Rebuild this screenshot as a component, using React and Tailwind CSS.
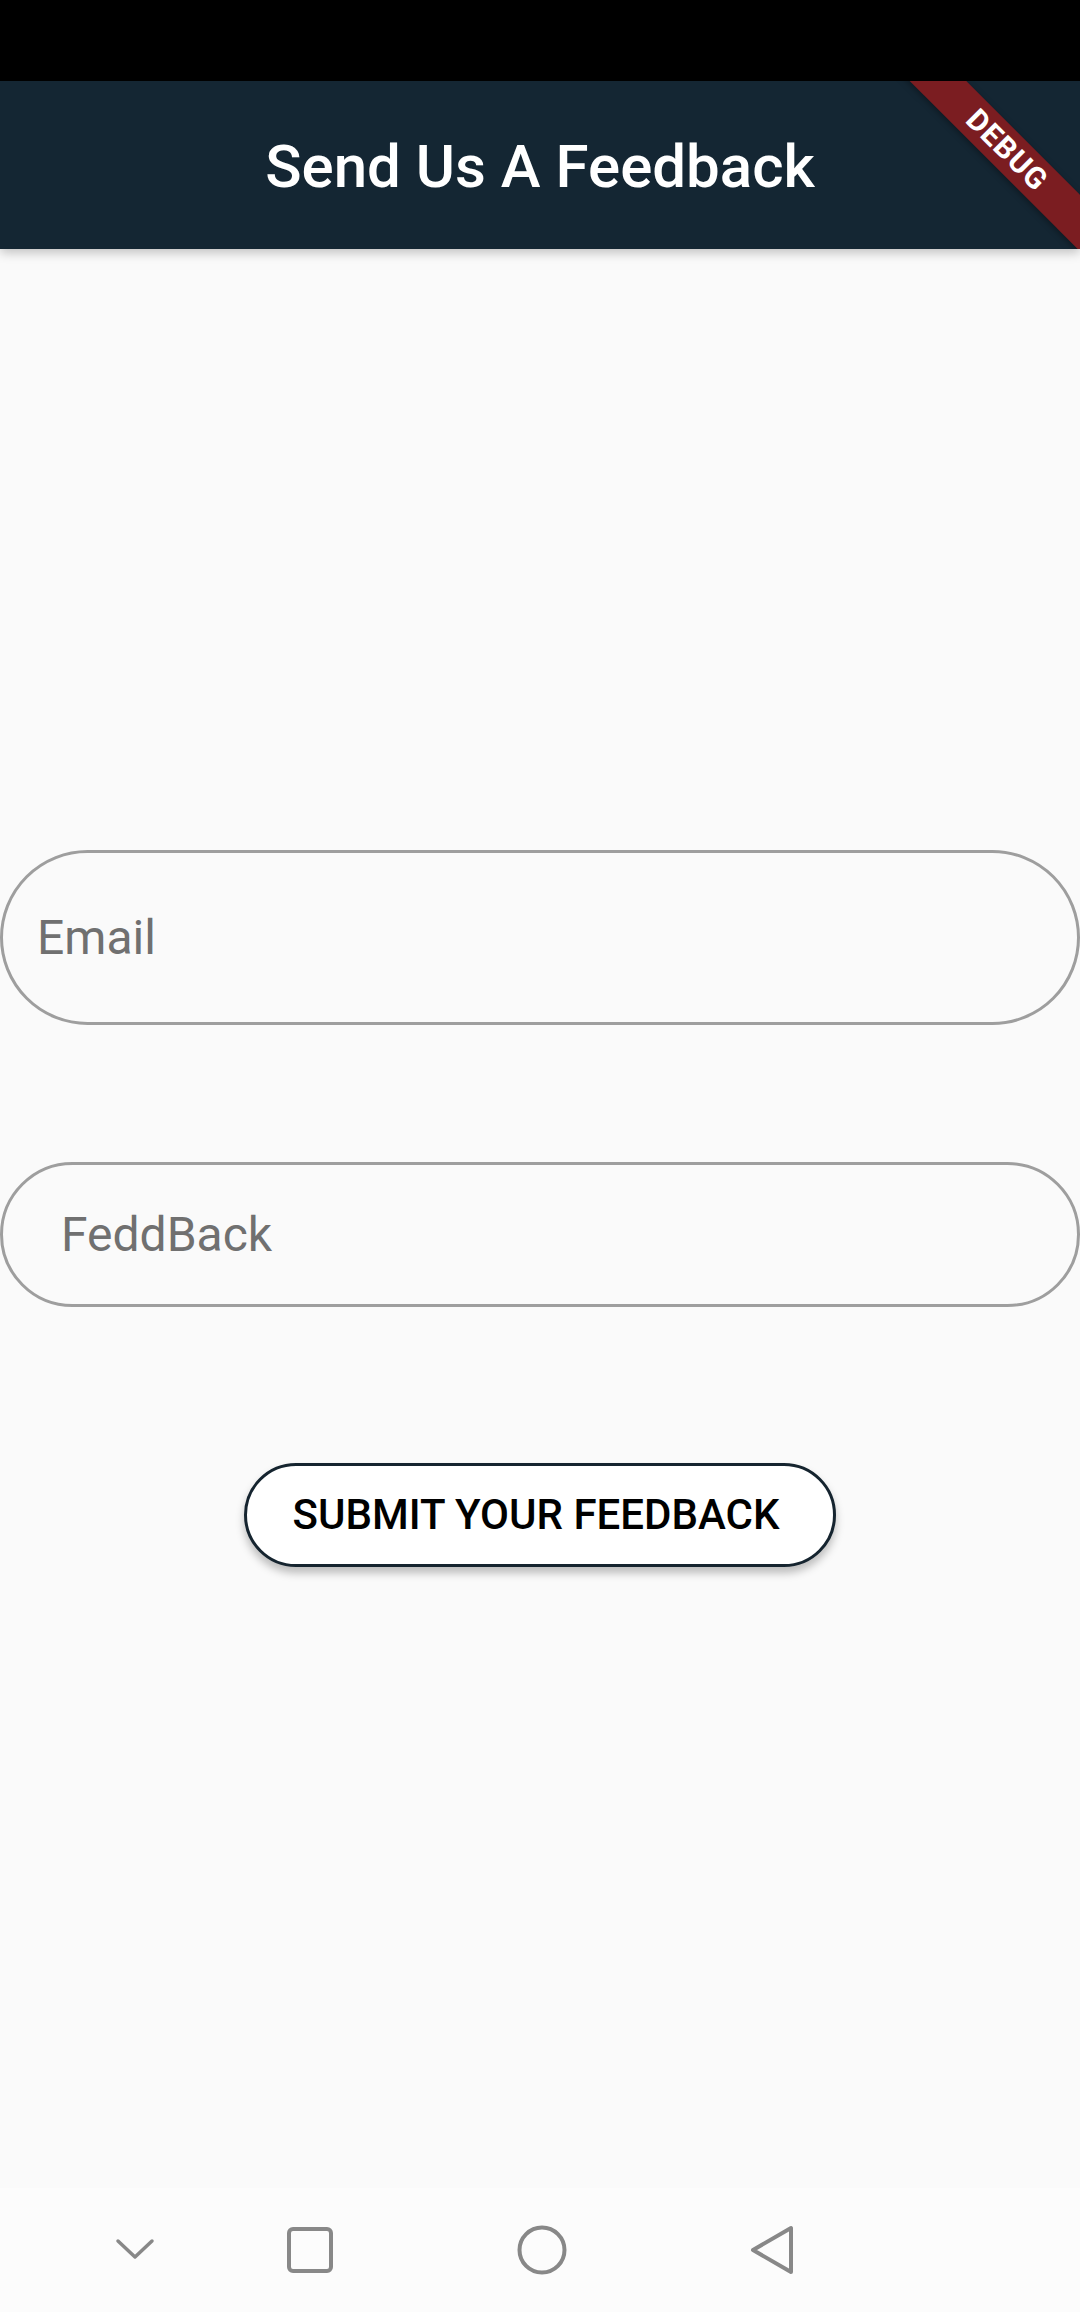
import React from "react";

const DebugBanner = () => (
  <div className="pointer-events-none absolute left-[857px] top-[49px] flex h-[40px] w-[300px] rotate-45 items-center justify-center bg-[#7b1d21] shadow-[0_2px_6px_rgba(0,0,0,0.35)]">
    <span className="text-[30px] font-bold leading-none tracking-[1px] text-white">DEBUG</span>
  </div>
);

const NavBar = () => (
  <div className="flex h-[124px] items-center bg-[#fcfcfc]">
    {/* back-ish chevron */}
    <svg className="ml-[115px]" width="40" height="24" viewBox="0 0 40 24" fill="none">
      <path d="M3 3 L20 19 L37 3" stroke="#888888" strokeWidth="3.5" strokeLinecap="round" strokeLinejoin="round" />
    </svg>
    <svg className="ml-[132px]" width="46" height="46" viewBox="0 0 46 46" fill="none">
      <rect x="2" y="2" width="42" height="42" rx="4" stroke="#888888" strokeWidth="4" />
    </svg>
    <svg className="ml-[184px]" width="50" height="50" viewBox="0 0 50 50" fill="none">
      <circle cx="25" cy="25" r="22.5" stroke="#888888" strokeWidth="4" />
    </svg>
    <svg className="ml-[182px]" width="46" height="52" viewBox="0 0 46 52" fill="none">
      <path d="M42 4 L42 48 L4 26 Z" stroke="#888888" strokeWidth="4" strokeLinejoin="round" />
    </svg>
  </div>
);

const App = () => {
  return (
    <div className="flex min-h-[2312px] flex-col bg-[#fafafa] font-['Roboto',sans-serif]">
      {/* status bar */}
      <div className="h-[81px] bg-black" />

      {/* app bar */}
      <div className="relative z-10 flex h-[168px] items-center justify-center overflow-hidden bg-[#142633] shadow-[0_4px_10px_rgba(0,0,0,0.22)]">
        <h1 className="pt-[4px] text-[60px] font-medium leading-none text-white">Send Us A Feedback</h1>
        <DebugBanner />
      </div>

      {/* form */}
      <div className="flex flex-1 flex-col">
        <div className="mt-[601px] flex h-[175px] items-center rounded-full border-[3px] border-[#9e9e9e] pl-[34px]">
          <span className="text-[48px] leading-none text-[#707070]">Email</span>
        </div>

        <div className="mt-[137px] flex h-[145px] items-center rounded-full border-[3px] border-[#9e9e9e] pl-[58px]">
          <span className="text-[48px] leading-none text-[#707070]">FeddBack</span>
        </div>

        <div className="mt-[156px] flex justify-center">
          <button className="flex h-[104px] w-[592px] items-center justify-center rounded-full border-[3px] border-[#15242f] bg-white pr-[8px] shadow-[0_6px_8px_rgba(0,0,0,0.25)]">
            <span className="text-[42px] font-medium leading-none text-black">SUBMIT YOUR FEEDBACK</span>
          </button>
        </div>
      </div>

      <NavBar />
    </div>
  );
};

export default App;
